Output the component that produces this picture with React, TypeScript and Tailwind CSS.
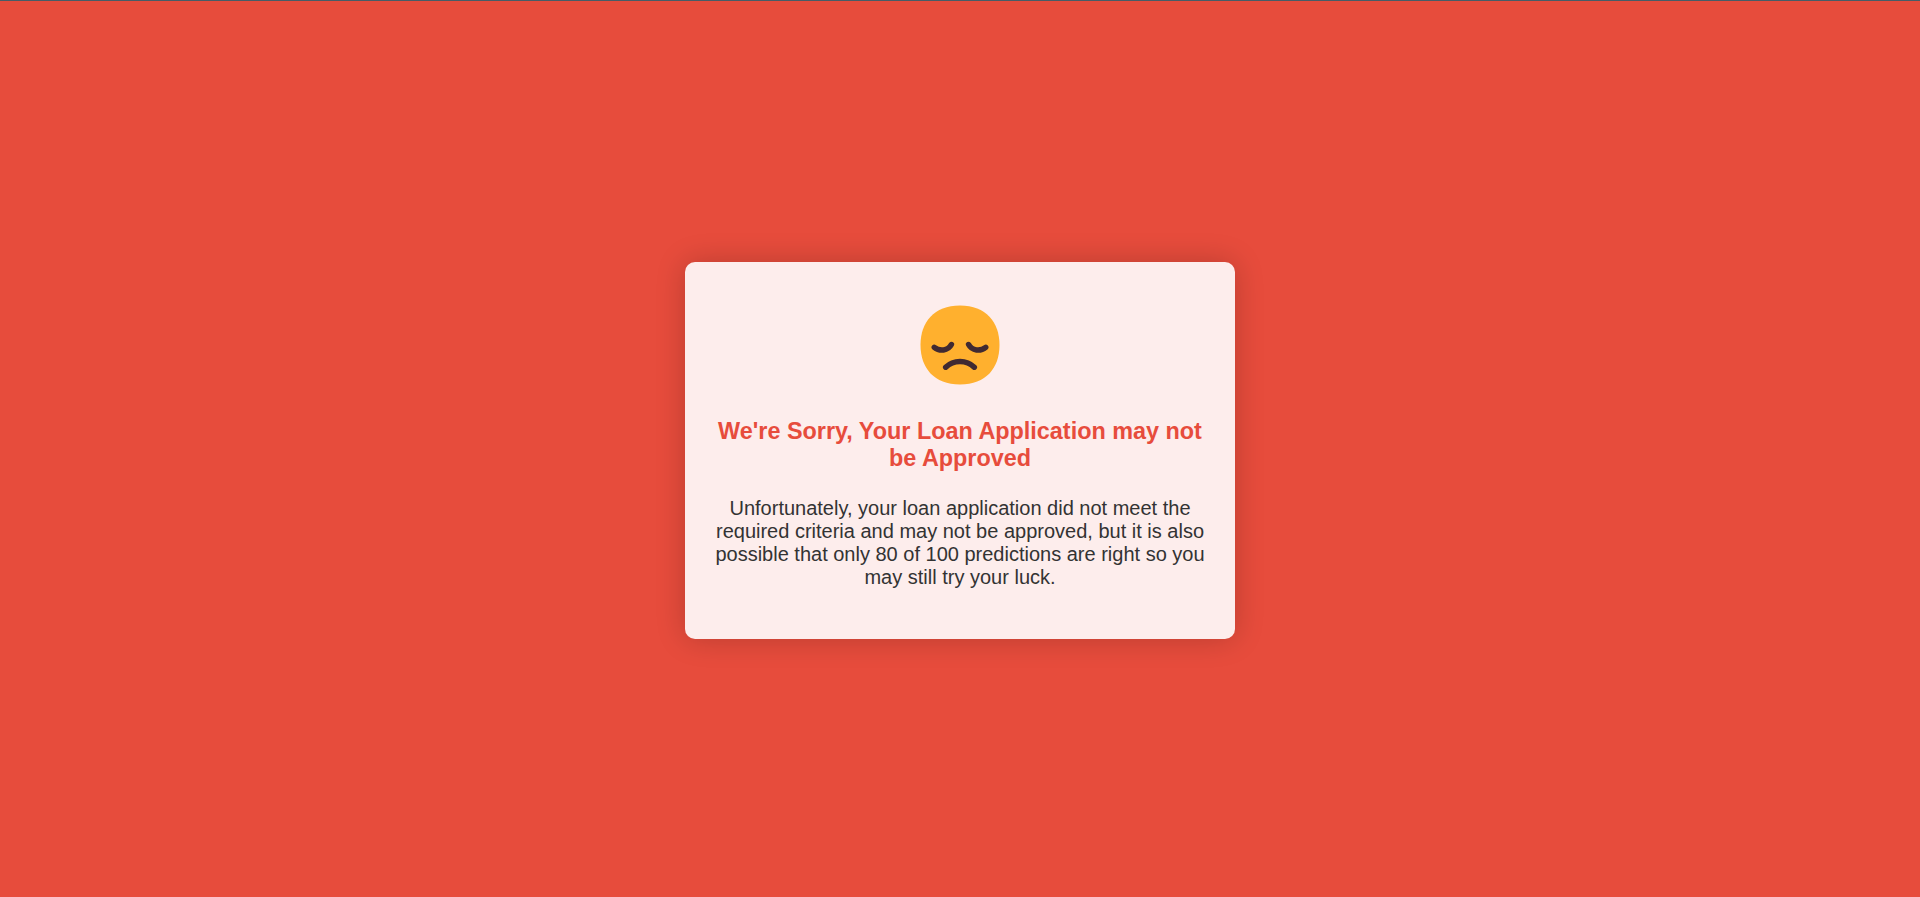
export default function App() {
  return (
    <div className="flex h-[897px] w-full flex-col bg-[#e74c3c] font-['Liberation_Sans',Arial,sans-serif]">
      <div className="h-px w-full shrink-0 bg-[#465c67]" />
      <main className="flex flex-1 items-center justify-center pt-[3px]">
        <section className="flex h-[377px] w-[550px] flex-col items-center rounded-[10px] bg-[#fdedec] px-[30px] pt-[43px] text-center shadow-[0_0_30px_rgba(0,0,0,0.2)]">
          <svg className="size-20 shrink-0" viewBox="0 0 80 80" fill="none">
            <path d="M40 .5C66 .5 79.500 17 79.500 40S66 79.500 40 79.500 .5 63 .5 40 14 .5 40 .5Z" fill="#ffb02e" />
            <path d="M14.300 42.300C19.500 46.500 28 46 31.400 39.500M48.600 39.500C52 46 60.500 46.500 65.700 42.300M25.700 62.200C33.500 54.500 46.500 54.500 54.300 62.200" stroke="#402a32" strokeWidth="5.500" strokeLinecap="round" />
          </svg>
          <h1 className="mt-[33px] text-[23.4px] leading-[27px] font-bold text-[#e74c3c]">We're Sorry, Your Loan Application may not be Approved</h1>
          <p className="mt-[25px] text-[20px] leading-[23px] text-[#333]">Unfortunately, your loan application did not meet the required criteria and may not be approved, but it is also possible that only 80 of 100 predictions are right so you may still try your luck.</p>
        </section>
      </main>
    </div>
  );
}
